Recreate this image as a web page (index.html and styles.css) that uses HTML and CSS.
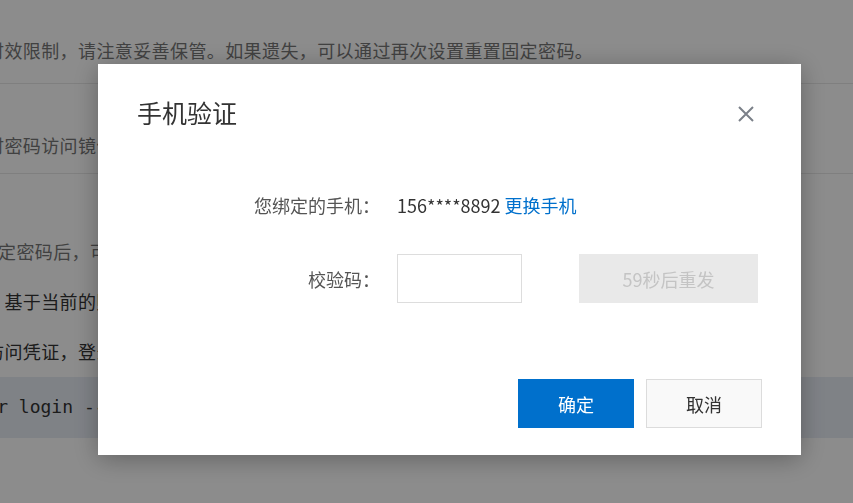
FILE: index.html
```html
<!DOCTYPE html>
<html lang="zh-CN">
<head>
    <meta charset="UTF-8">
    <meta name="viewport" content="width=device-width, initial-scale=1.0">
    <title>手机验证</title>
    <link rel="stylesheet" href="styles.css">
</head>
<body>
    <div class="page">
        <div class="section first">
            <p class="muted">时效限制，请注意妥善保管。如果遗失，可以通过再次设置重置固定密码。</p>
        </div>
        <div class="section second">
            <p class="muted">时密码访问镜像仓库，临时密码有效期为1小时，过期后请重新获取。</p>
        </div>
        <div class="content">
            <p class="muted indent">定密码后，可以使用以下命令登录镜像仓库。</p>
            <p>：基于当前的账号生成访问凭证，凭证长期有效。</p>
            <p>访问凭证，登录时输入固定密码即可完成验证。</p>
            <pre class="code">docker login --username=dev@example registry.example.com</pre>
        </div>
    </div>

    <div class="mask">
        <div class="dialog">
            <div class="dialog-head">
                <h3>手机验证</h3>
                <button class="close" type="button">
                    <svg width="16" height="16" viewBox="0 0 16 16">
                        <path d="M1 1 L15 15 M15 1 L1 15" stroke="#7b8089" stroke-width="2" fill="none"/>
                    </svg>
                </button>
            </div>
            <div class="dialog-body">
                <div class="row">
                    <span class="label">您绑定的手机：</span>
                    <span class="value">156****8892 <a href="#">更换手机</a></span>
                </div>
                <div class="row">
                    <span class="label">校验码：</span>
                    <input type="text" class="code-input">
                    <button type="button" class="resend" disabled>59秒后重发</button>
                </div>
            </div>
            <div class="dialog-foot">
                <button type="button" class="btn primary">确定</button>
                <button type="button" class="btn">取消</button>
            </div>
        </div>
    </div>
</body>
</html>
```

FILE: styles.css
```css
body {
    margin: 0;
    font-family: "Noto Sans CJK SC", "Noto Sans", sans-serif;
    background-color: white;
    color: #333;
    overflow: hidden;
}
p {
    margin: 0;
}
.page {
    margin-left: -14px;
    font-size: 18px;
    line-height: 30px;
    letter-spacing: 0.4px;
    white-space: nowrap;
}
.section {
    border-bottom: 1px solid #e8e8e8;
}
.section.first {
    padding: 35px 0 18px;
}
.section.second {
    padding: 46px 0 13px;
}
.content {
    padding-top: 62px;
}
.content p {
    margin-bottom: 20px;
}
.content p.indent {
    text-indent: 12px;
}
.muted {
    color: #777;
}
.code {
    margin: -9px 0 0;
    padding: 15px 0 16px;
    background-color: #e8edf5;
    font-family: "DejaVu Sans Mono", monospace;
    font-size: 18px;
    line-height: 30px;
    letter-spacing: 0;
    text-indent: -43px;
    color: #333;
}

.mask {
    position: fixed;
    top: 0;
    left: 0;
    right: 0;
    bottom: 0;
    background-color: rgba(0, 0, 0, 0.45);
    padding: 64px 0 0 98px;
}
.dialog {
    width: 703px;
    background-color: white;
    box-shadow: 0 4px 24px rgba(0, 0, 0, 0.3);
}
.dialog-head {
    display: flex;
    justify-content: space-between;
    align-items: center;
    padding: 32px 47px 0 39px;
}
.dialog-head h3 {
    margin: 0;
    font-size: 25px;
    font-weight: normal;
    line-height: 32px;
    color: #333;
}
.close {
    display: flex;
    padding: 0;
    margin-top: 3px;
    border: none;
    background: none;
    cursor: pointer;
}
.dialog-body {
    padding: 52px 39px 0;
    display: flex;
    flex-direction: column;
    gap: 25px;
}
.row {
    display: flex;
    align-items: center;
    height: 49px;
    font-size: 18px;
}
.label {
    width: 243px;
    margin-right: 17px;
    text-align: right;
    color: #555;
}
.value {
    color: #333;
}
.value a {
    color: #0070cc;
    text-decoration: none;
}
.code-input {
    box-sizing: border-box;
    width: 125px;
    height: 49px;
    border: 1px solid #ddd;
    outline: none;
    margin: 0;
}
.resend {
    width: 179px;
    height: 49px;
    margin-left: 57px;
    border: none;
    background-color: #e9e9e9;
    color: #c4c4c4;
    font-family: inherit;
    font-size: 18px;
}
.dialog-foot {
    display: flex;
    justify-content: flex-end;
    gap: 12px;
    padding: 76px 39px 27px;
}
.btn {
    box-sizing: border-box;
    width: 116px;
    height: 49px;
    border: 1px solid #dcdcdc;
    background-color: #f9f9f9;
    color: #333;
    font-family: inherit;
    font-size: 18px;
    cursor: pointer;
}
.btn.primary {
    border: none;
    background-color: #0070cc;
    color: white;
}
```
